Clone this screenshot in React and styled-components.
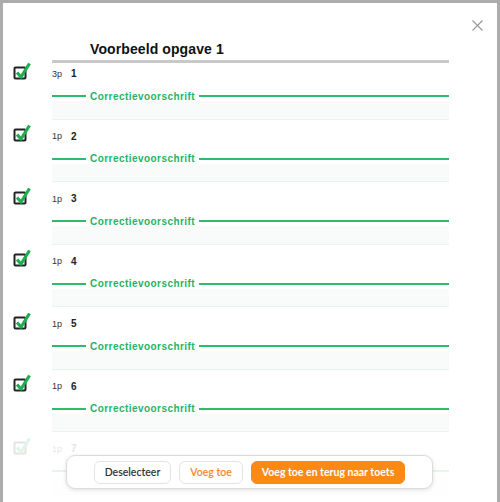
import React from "react"
import styled, { createGlobalStyle } from "styled-components"

const GlobalStyle = createGlobalStyle`
  html, body {
    margin: 0;
    padding: 0;
    background: #acacac;
    overflow: hidden;
  }
  body {
    font-family: "Liberation Sans", Arial, sans-serif;
  }
`

const Modal = styled.div`
  position: relative;
  margin: 3px 3px 0 3px;
  height: 499px;
  background: #fff;
  padding: 0 48px 0 9px;
  box-sizing: border-box;
  overflow: hidden;
`

const Close = styled.button`
  position: absolute;
  top: 14px;
  right: 12px;
  width: 16px;
  height: 16px;
  padding: 0;
  border: 0;
  background: none;
  display: flex;
  align-items: center;
  justify-content: center;
`

const Header = styled.div`
  margin: 37px 0 0 40px;
  padding: 0 0 2px 38px;
  border-bottom: 3px solid #c8c8c8;
`

const Title = styled.h1`
  margin: 0;
  font-size: 14px;
  line-height: 18px;
  font-weight: 700;
  letter-spacing: 0.1px;
  color: #111;
`

const List = styled.div`
  margin-top: -5.6px;
`

const Row = styled.div`
  display: grid;
  grid-template-columns: 40px 1fr;
  height: 62.5px;
  opacity: ${(p) => (p.$faded ? 0.12 : 1)};
`

const CheckCell = styled.div`
  padding-top: 2.5px;
`

const Body = styled.div`
  display: flex;
  flex-direction: column;
  border-bottom: 1.5px solid #e4f4ee;
`

const Head = styled.div`
  display: flex;
  align-items: center;
  height: 13px;
  margin-top: 10px;
  color: #222;
`

const Points = styled.span`
  width: 19px;
  font-size: 9px;
  color: #333;
`

const Number = styled.span`
  font-size: 10px;
  font-weight: 700;
`

const Correctie = styled.div`
  display: flex;
  align-items: center;
  gap: 4px;
  height: 10px;
  margin-top: 11px;
  font-size: 10px;
  letter-spacing: 0.45px;
  font-weight: 700;
  color: #27b263;
  &::before,
  &::after {
    content: "";
    height: 2px;
    background: #2dbb6c;
  }
  &::before {
    width: 34px;
  }
  &::after {
    flex: 1;
  }
`

const Fill = styled.div`
  flex: 1;
  background: #f9fbfa;
`

const Bar = styled.div`
  position: absolute;
  left: 63px;
  bottom: 13px;
  width: 367px;
  height: 34px;
  box-sizing: border-box;
  background: #fff;
  border: 1px solid #dcdcdc;
  border-radius: 9px;
  box-shadow: 0 1px 4px rgba(0, 0, 0, 0.12);
  display: flex;
  align-items: center;
  justify-content: center;
  gap: 8px;
  font-family: Lato, "Open Sans", sans-serif;
`

const Button = styled.button`
  height: 23px;
  padding: 0 ${(p) => (p.$primary ? 10 : 10)}px;
  border-radius: 6px;
  font-family: inherit;
  font-size: 10.5px;
  font-weight: ${(p) => (p.$primary ? 700 : 600)};
  border: 1px solid ${(p) => (p.$primary ? "#fb8a14" : "#e4e4e4")};
  background: ${(p) => (p.$primary ? "#fb8a14" : "#fff")};
  color: ${(p) => (p.$primary ? "#fff" : p.$accent ? "#f7861c" : "#333")};
`

const Checkbox = () => (
  <svg width="20" height="22" viewBox="0 0 20 22">
    <rect x="2.5" y="7.5" width="11" height="11" rx="1" fill="#fff" stroke="#222" strokeWidth="2" />
    <path d="M5 12.5 L9 17 L17.5 3.5" fill="none" stroke="#1fae4f" strokeWidth="3.2" strokeLinejoin="round" />
  </svg>
)

const rows = [
  { p: "3p", n: 1 },
  { p: "1p", n: 2 },
  { p: "1p", n: 3 },
  { p: "1p", n: 4 },
  { p: "1p", n: 5 },
  { p: "1p", n: 6 },
  { p: "1p", n: 7 },
]

export default function App() {
  return (
    <>
      <GlobalStyle />
      <Modal>
        <Close aria-label="Sluiten">
          <svg width="11" height="11" viewBox="0 0 11 11">
            <path d="M0.5 0.5 L10.5 10.5 M10.5 0.5 L0.5 10.5" stroke="#9a9a9a" strokeWidth="1.2" />
          </svg>
        </Close>
        <Header>
          <Title>Voorbeeld opgave 1</Title>
        </Header>
        <List>
          {rows.map((r) => (
            <Row key={r.n} $faded={r.n === 7}>
              <CheckCell>
                <Checkbox />
              </CheckCell>
              <Body>
                <Head>
                  <Points>{r.p}</Points>
                  <Number>{r.n}</Number>
                </Head>
                <Correctie>Correctievoorschrift</Correctie>
                <Fill />
              </Body>
            </Row>
          ))}
        </List>
        <Bar>
          <Button>Deselecteer</Button>
          <Button $accent>Voeg toe</Button>
          <Button $primary>Voeg toe en terug naar toets</Button>
        </Bar>
      </Modal>
    </>
  )
}
